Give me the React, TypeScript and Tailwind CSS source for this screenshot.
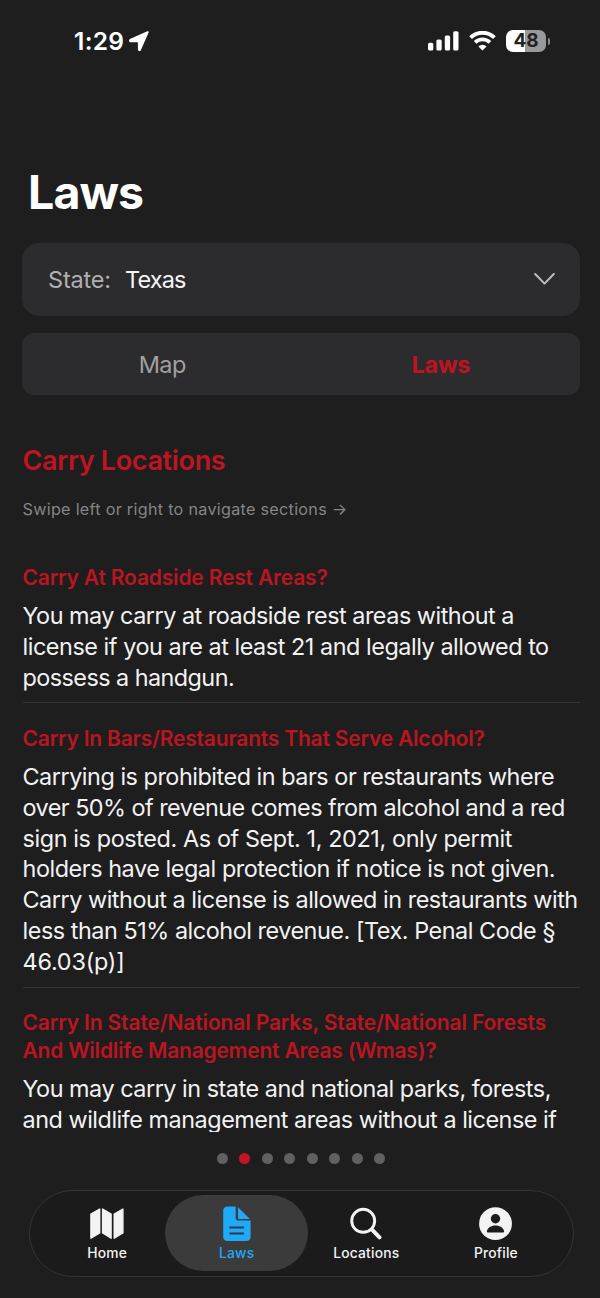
type Line = { text: string; tracking: string };
type Section = { title: Line[]; body: Line[] };

const sections: Section[] = [
  {
    title: [{ text: "Carry At Roadside Rest Areas?", tracking: "tracking-[-0.17px]" }],
    body: [
      { text: "You may carry at roadside rest areas without a", tracking: "tracking-[-0.49px]" },
      { text: "license if you are at least 21 and legally allowed to", tracking: "tracking-[-0.45px]" },
      { text: "possess a handgun.", tracking: "tracking-[-0.55px]" },
    ],
  },
  {
    title: [{ text: "Carry In Bars/Restaurants That Serve Alcohol?", tracking: "tracking-[-0.2px]" }],
    body: [
      { text: "Carrying is prohibited in bars or restaurants where", tracking: "tracking-[-0.47px]" },
      { text: "over 50% of revenue comes from alcohol and a red", tracking: "tracking-[-0.53px]" },
      { text: "sign is posted. As of Sept. 1, 2021, only permit", tracking: "tracking-[-0.39px]" },
      { text: "holders have legal protection if notice is not given.", tracking: "tracking-[-0.44px]" },
      { text: "Carry without a license is allowed in restaurants with", tracking: "tracking-[-0.47px]" },
      { text: "less than 51% alcohol revenue. [Tex. Penal Code §", tracking: "tracking-[-0.46px]" },
      { text: "46.03(p)]", tracking: "tracking-[-0.2px]" },
    ],
  },
  {
    title: [
      { text: "Carry In State/National Parks, State/National Forests", tracking: "tracking-[-0.14px]" },
      { text: "And Wildlife Management Areas (Wmas)?", tracking: "tracking-[-0.22px]" },
    ],
    body: [
      { text: "You may carry in state and national parks, forests,", tracking: "tracking-[-0.48px]" },
      { text: "and wildlife management areas without a license if", tracking: "tracking-[-0.47px]" },
    ],
  },
];

const pageCount = 8;
const currentPage = 1;

function StatusBar() {
  return (
    <header className="flex h-[82px] shrink-0 items-center justify-between pl-[74px] pr-[50px]">
      <div className="flex items-center gap-[5px]">
        <span className="text-[24.5px] font-semibold leading-[30px] tracking-[0.3px]">1:29</span>
        <svg width="20" height="20" viewBox="0 0 20 20" fill="currentColor" stroke="currentColor" strokeWidth="2" strokeLinejoin="round">
          <path d="M18.7 1.2 1.3 9c-.5.3-.3 1.200.2 1.200h8.400v8.300c0 .6.800.8 1 .3z" />
        </svg>
      </div>
      <div className="flex items-center">
        <svg width="31" height="20" viewBox="0 0 31 20" fill="currentColor" className="mr-[10px]">
          <rect x="0" y="11.8" width="5.3" height="7.7" rx="1.5" />
          <rect x="8.4" y="8.5" width="5.3" height="11" rx="1.5" />
          <rect x="16.8" y="4.5" width="5.3" height="15" rx="1.5" />
          <rect x="25.2" y="0.3" width="5.3" height="19.2" rx="1.5" />
        </svg>
        <svg width="27" height="20" viewBox="0 0 27 20" fill="none" stroke="currentColor" className="mr-[10.5px]">
          <path d="M1.6 6.6a17 17 0 0 1 23.8 0" strokeWidth="3.9" />
          <path d="M6.1 11.3a10.6 10.6 0 0 1 14.8 0" strokeWidth="3.8" />
          <path d="m13.5 19.5-4.1-4.1a5.8 5.8 0 0 1 8.2 0z" fill="currentColor" stroke="none" />
        </svg>
        <div className="flex h-[22px] w-[40px] items-center justify-center rounded-[7px] bg-[linear-gradient(90deg,#fff_48%,#999_48%)]">
          <span className="text-[19px] font-bold leading-[22px] text-[#222]">48</span>
        </div>
        <div className="ml-[1.5px] h-[7px] w-[2.5px] rounded-r-full bg-[#8b8b8b]" />
      </div>
    </header>
  );
}

function MapIcon() {
  return (
    <svg width="34" height="36" viewBox="0 0 34 36" fill="currentColor" stroke="currentColor" strokeWidth="1.4" strokeLinejoin="round">
      <path d="m.9 8.1 8.8-5.100v24L.9 32.200z" />
      <path d="m12.600 3 8.500 5.100v24.100L12.600 27z" />
      <path d="M24.200 8.100 32.900 3v24l-8.700 5.200z" />
    </svg>
  );
}

function DocumentIcon() {
  return (
    <svg width="28" height="36" viewBox="0 0 28 36" fill="none">
      <path d="M4.500.5h8.200v11.200c0 1.600 1.200 2.900 2.900 2.900h12v16.200c0 2.600-1.700 4.200-4.300 4.200H4.500C1.800 35 .2 33.400.2 30.800V4.800C.2 2.100 1.800.5 4.500.5z" fill="currentColor" />
      <path d="M15 1.300 26.900 13H16.300c-.8 0-1.300-.5-1.300-1.300z" fill="currentColor" />
      <path d="M7.200 21.400h13M7.200 27.400h13" stroke="#2d3b45" strokeWidth="2" strokeLinecap="round" />
    </svg>
  );
}

function SearchIcon() {
  return (
    <svg width="32" height="36" viewBox="0 0 32 36" fill="none" stroke="currentColor" strokeLinecap="round">
      <circle cx="13.2" cy="14.8" r="11.5" strokeWidth="2.9" />
      <path d="m22 23.600 7.500 7.700" strokeWidth="4" />
    </svg>
  );
}

function ProfileIcon() {
  return (
    <svg width="33" height="36" viewBox="0 0 33 36">
      <circle cx="16.5" cy="17.7" r="16.4" fill="currentColor" />
      <circle cx="16.5" cy="12.8" r="4.700" fill="#1b1b1b" />
      <path d="M8.700 26.400c-.6 0-.9-.5-.8-1.200.6-3.500 4.100-5.800 8.600-5.800s8 2.300 8.600 5.800c.1.700-.2 1.200-.8 1.200z" fill="#1b1b1b" />
    </svg>
  );
}

const tabs = [
  { label: "Home", icon: <MapIcon />, active: false },
  { label: "Laws", icon: <DocumentIcon />, active: true },
  { label: "Locations", icon: <SearchIcon />, active: false },
  { label: "Profile", icon: <ProfileIcon />, active: false },
];

export default function App() {
  return (
    <div className="flex h-[1298px] w-[600px] flex-col overflow-hidden bg-[#1e1e1e] font-['Inter',sans-serif] text-white">
      <StatusBar />

      <h1 className="ml-[28px] mt-[82px] h-[56px] shrink-0 text-[46.5px] font-bold leading-[56px] tracking-[-0.9px]">Laws</h1>

      <button className="ml-[22px] mr-[20px] mt-[22.5px] flex h-[73px] shrink-0 items-center rounded-[17px] bg-[#2c2c2e] pl-[26px] pr-[25px] text-left text-[23.5px] leading-[32px]">
        <span className="w-[77px] pt-[2px] tracking-[-0.2px] text-[#b0b0b1]">State:</span>
        <span className="flex-1 pt-[2px] tracking-[-0.9px] text-[#f5f5f5]">Texas</span>
        <svg width="21" height="12" viewBox="0 0 21 12" fill="none" stroke="#bdbdbf" strokeWidth="2" strokeLinecap="round" strokeLinejoin="round">
          <path d="m1.200 1 9.300 9.600L19.800 1" />
        </svg>
      </button>

      <nav className="ml-[22px] mr-[20px] mt-[17.5px] grid h-[62px] shrink-0 grid-cols-2 items-center rounded-[12px] bg-[#2c2c2e] pl-px pt-px text-center text-[23.5px]">
        <span className="tracking-[-0.6px] text-[#a0a0a1]">Map</span>
        <span className="font-bold tracking-[-0.4px] text-[#bf1320]">Laws</span>
      </nav>

      <h2 className="ml-[22.5px] mt-[49.5px] h-[32px] shrink-0 text-[27px] font-semibold leading-[32px] tracking-[-0.33px] text-[#bf1522]">
        Carry Locations
      </h2>
      <p className="ml-[22.5px] mt-[20.5px] h-[24px] shrink-0 whitespace-nowrap text-[16.2px] leading-[24px] tracking-[0.28px] text-[#858585]">
        Swipe left or right to navigate sections →
      </p>

      <main className="ml-[22.5px] mr-[20px] mt-[43px] h-[568px] shrink-0 overflow-hidden">
        {sections.map((section, i) => (
          <section key={i} className="mb-[21.5px] border-b border-[#343434] pb-[8.5px]">
            <h3 className="mb-[9px] text-[21px] font-semibold leading-[28px] text-[#ba1521]">
              {section.title.map((line) => (
                <span key={line.text} className={`block whitespace-nowrap ${line.tracking}`}>{line.text}</span>
              ))}
            </h3>
            <p className="text-[23.4px] leading-[30.9px] text-[#f2f2f2]">
              {section.body.map((line) => (
                <span key={line.text} className={`block whitespace-nowrap ${line.tracking}`}>{line.text}</span>
              ))}
            </p>
          </section>
        ))}
      </main>

      <div className="mt-[20.5px] flex h-[12px] shrink-0 items-center justify-center gap-[11.2px] pl-[2px]">
        {Array.from({ length: pageCount }, (_, i) => (
          <span key={i} className={`size-[11.3px] rounded-full ${i === currentPage ? "bg-[#c41424]" : "bg-[#606060]"}`} />
        ))}
      </div>

      <nav className="ml-[29px] mt-[25px] grid h-[87px] w-[545px] shrink-0 grid-cols-4 items-center rounded-full border border-[#343434] bg-[#1b1b1b] px-[12.3px] text-[#f3f3f3]">
        {tabs.map((tab) => (
          <button
            key={tab.label}
            className={`-mx-[6.7px] flex h-[76px] flex-col items-center rounded-full pt-[10.5px] ${tab.active ? "bg-[#3b3b3b] text-[#20a9f8]" : ""}`}
          >
            {tab.icon}
            <span className="mt-[2px] text-[13.8px] font-medium leading-[18px] tracking-[0.2px]">{tab.label}</span>
          </button>
        ))}
      </nav>
    </div>
  );
}
